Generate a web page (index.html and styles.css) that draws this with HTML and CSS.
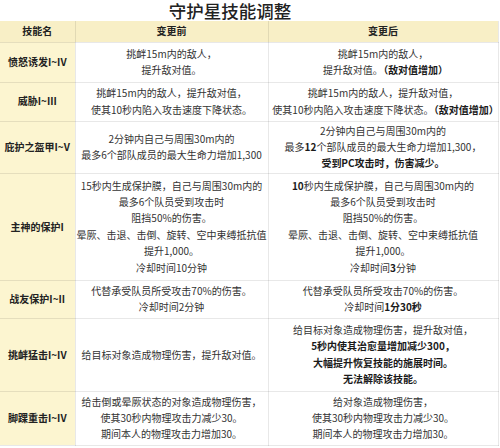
FILE: index.html
```html
<!DOCTYPE html>
<html lang="zh-CN">
<head>
<meta charset="utf-8">
<title>守护星技能调整</title>
<link rel="stylesheet" href="styles.css">
</head>
<body>
<div class="page">
  <h1 class="title">守护星技能调整</h1>
  <table class="skills">
    <colgroup>
      <col class="c-name">
      <col class="c-before">
      <col class="c-after">
    </colgroup>
    <thead>
      <tr>
        <th>技能名</th>
        <th>变更前</th>
        <th>变更后</th>
      </tr>
    </thead>
    <tbody>
      <tr class="r1">
        <td class="name">愤怒诱发I~IV</td>
        <td>挑衅15m内的敌人，<br>提升敌对值。</td>
        <td>挑衅15m内的敌人，<br><span class="half">提升敌对值。 <b class="note">（敌对值增加）</b></span></td>
      </tr>
      <tr class="r2">
        <td class="name">威胁I~III</td>
        <td>挑衅15m内的敌人，提升敌对值，<br>使其10秒内陷入攻击速度下降状态。</td>
        <td>挑衅15m内的敌人，提升敌对值，<br><span class="half">使其10秒内陷入攻击速度下降状态。 <b class="note">（敌对值增加）</b></span></td>
      </tr>
      <tr class="r3">
        <td class="name">庇护之盔甲I~V</td>
        <td>2分钟内自己与周围30m内的<br>最多6个部队成员的最大生命力增加1,300</td>
        <td>2分钟内自己与周围30m内的<br>最多<b>12</b>个部队成员的最大生命力增加1,300，<br><b>受到PC攻击时，伤害减少。</b></td>
      </tr>
      <tr class="r4">
        <td class="name">主神的保护I</td>
        <td>15秒内生成保护膜，自己与周围30m内的<br>最多6个队员受到攻击时<br>阻挡50%的伤害。<br>晕厥、击退、击倒、旋转、空中束缚抵抗值<br>提升1,000。<br>冷却时间10分钟</td>
        <td><b>10</b>秒内生成保护膜，自己与周围30m内的<br>最多6个队员受到攻击时<br>阻挡50%的伤害。<br>晕厥、击退、击倒、旋转、空中束缚抵抗值<br>提升1,000。<br>冷却时间<b>3</b>分钟</td>
      </tr>
      <tr class="r5">
        <td class="name">战友保护I~II</td>
        <td>代替承受队员所受攻击70%的伤害。<br>冷却时间2分钟</td>
        <td>代替承受队员所受攻击70%的伤害。<br>冷却时间<b>1分30秒</b></td>
      </tr>
      <tr class="r6">
        <td class="name">挑衅猛击I~IV</td>
        <td>给目标对象造成物理伤害，提升敌对值。</td>
        <td>给目标对象造成物理伤害，提升敌对值，<br><b>5秒内使其治愈量增加减少300，<br>大幅提升恢复技能的施展时间。<br>无法解除该技能。</b></td>
      </tr>
      <tr class="r7">
        <td class="name">脚踝重击I~IV</td>
        <td>给击倒或晕厥状态的对象造成物理伤害，<br>使其30秒内物理攻击力减少30。<br>期间本人的物理攻击力增加30。</td>
        <td>给对象造成物理伤害，<br>使其30秒内物理攻击力减少30。<br>期间本人的物理攻击力增加30。</td>
      </tr>
    </tbody>
  </table>
</div>
</body>
</html>
```
FILE: styles.css
```css
* { box-sizing: border-box; }
html, body {
  margin: 0;
  padding: 0;
  background: #ffffff;
}
body {
  font-family: "Noto Sans CJK SC", "Noto Sans", sans-serif;
  color: #333333;
  width: 500px;
  height: 448px;
  overflow: hidden;
}
.page {
  width: 500px;
}
.title {
  margin: 0;
  height: 21px;
  line-height: 21px;
  font-size: 17.5px;
  font-weight: 500;
  color: #222222;
  text-align: center;
  padding-right: 40px;
}
.skills {
  width: 498px;
  border-collapse: collapse;
  table-layout: fixed;
  font-size: 10px;
  line-height: 16.4px;
}
.c-name { width: 75px; }
.c-before { width: 193px; }
.c-after { width: 230px; }
.skills th,
.skills td {
  border: 1px solid rgba(0, 0, 0, 0.09);
  text-align: center;
  vertical-align: middle;
  white-space: nowrap;
  padding: 1px 0;
}
.skills tr > :first-child { border-left: none; }
.skills thead th {
  height: 21px;
  background: #f8efc6;
  color: #222222;
  font-weight: 700;
  border-top: none;
}
.skills td.name {
  background: #fcf5d0;
  color: #222222;
  font-weight: 700;
}
.skills td b {
  color: #1a1a1a;
  font-weight: 700;
}
.half {
  font-feature-settings: "halt";
}
.note {
  margin-left: 3px;
}
.r1 { height: 40px; }
.r2 { height: 39px; }
.r3 { height: 52px; }
.r4 { height: 107px; }
.r5 { height: 38px; }
.r6 { height: 73px; }
.r7 { height: 54px; }
```
